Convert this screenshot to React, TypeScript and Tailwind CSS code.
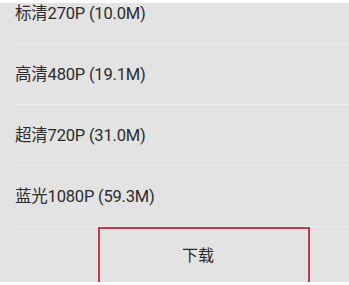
import React from "react";

const items = [
  "标清270P (10.0M)",
  "高清480P (19.1M)",
  "超清720P (31.0M)",
  "蓝光1080P (59.3M)",
];

export default function App() {
  return (
    <div
      className="w-[349px] h-[285px] bg-white overflow-hidden"
      style={{ fontFamily: 'Roboto, "Noto Sans CJK SC", sans-serif' }}
    >
      <div className="mt-[3px] h-[279px] bg-[#e3e3e3] overflow-hidden">
        <div className="-mt-[20px]">
          {items.map((t) => (
            <div key={t} className="pl-[15px]">
              <div className="h-[61px] flex items-center pt-[2px] border-b border-[#ececec] text-[16.5px] tracking-[-0.2px] text-[#2b2b2b]">
                {t}
              </div>
            </div>
          ))}
          <div className="ml-[98px] w-[212px] h-[62px] border-x-2 border-t-2 border-[#c13a4d] flex items-center justify-center pr-[12px] pb-[6px] text-[16px] text-[#2b2b2b]">
            下载
          </div>
        </div>
      </div>
    </div>
  );
}
